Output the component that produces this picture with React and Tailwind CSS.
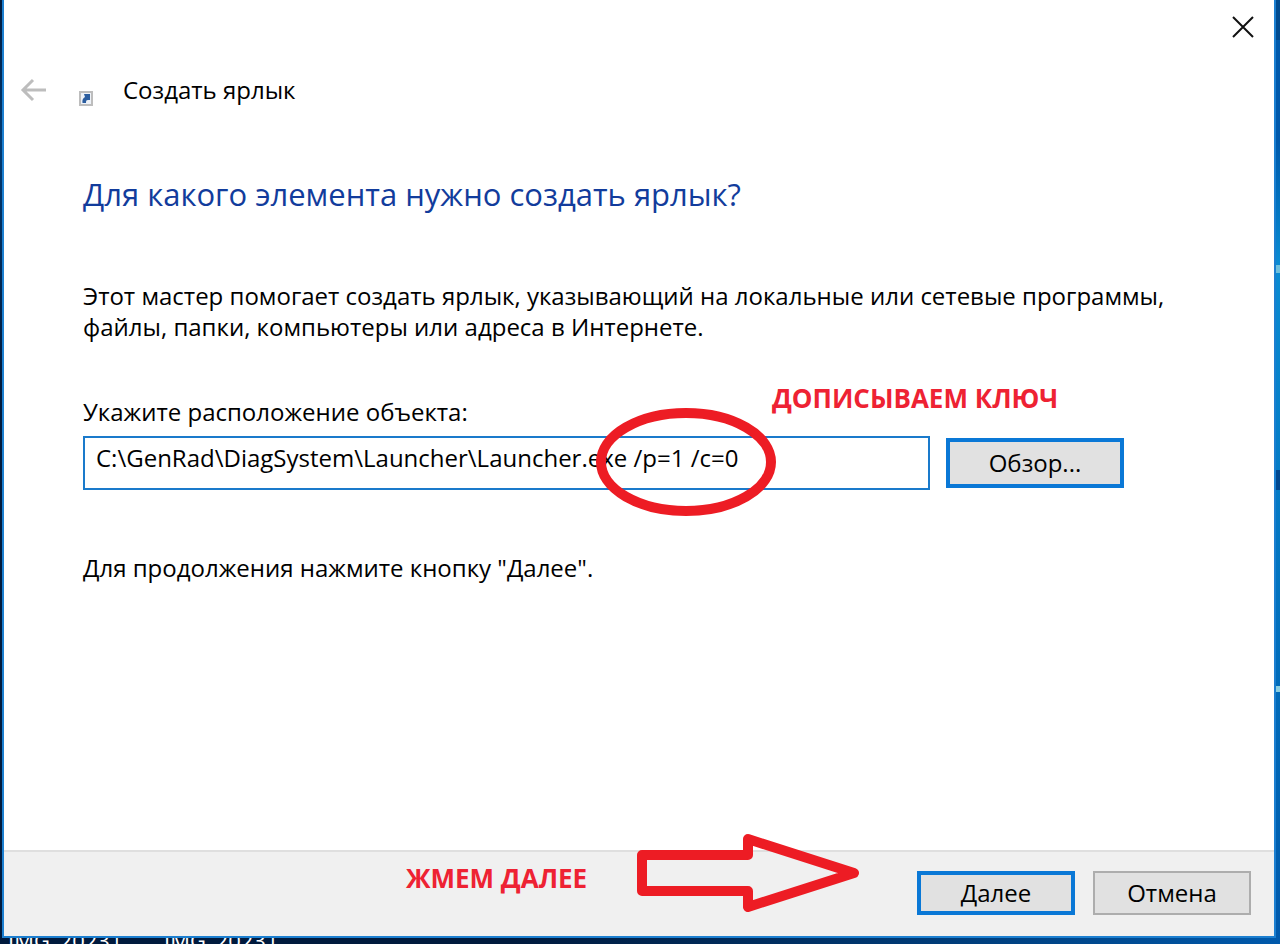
import React, { useState } from 'react';
import clsx from 'clsx';

const fileNames = ['IMG_20231', 'IMG_20231'];

const ShortcutIcon = () => (
    <svg width="14" height="15" viewBox="0 0 14 15" aria-hidden="true">
        <rect x="1" y="1" width="12" height="13" fill="#eef2f8" stroke="#bdbdbd" strokeWidth="2" />
        <path d="M5 3H11V9H9C7 9 7 10 7 12H3.500C3 9 4 7 6 6Z" fill="#2b5d9f" />
    </svg>
);

const BackArrow = () => (
    <svg width="27" height="24" viewBox="0 0 27 24" fill="none" stroke="#bdbdbd" strokeWidth="3" aria-hidden="true">
        <path d="M26 12H3M13 2L3 12L13 22" />
    </svg>
);

const CloseIcon = () => (
    <svg width="22" height="22" viewBox="0 0 22 22" fill="none" stroke="#111" strokeWidth="2" aria-hidden="true">
        <path d="M1 1L21 21M21 1L1 21" />
    </svg>
);

const DialogButton = ({ primary, className, children }) => (
    <button
        type="button"
        className={clsx(
            'shrink-0 bg-[#e1e1e1] text-center text-2xl text-black',
            primary ? 'border-4 border-[#0a78d6]' : 'border-2 border-[#adadad]',
            className
        )}
    >
        {children}
    </button>
);

// Red marker notes that lie over the dialog
const Note = ({ className, children }) => (
    <span className={clsx('absolute whitespace-nowrap text-[26px] leading-8 font-bold text-[#ee2233]', className)}>
        {children}
    </span>
);

const App = () => {
    const [location, setLocation] = useState('C:\\GenRad\\DiagSystem\\Launcher\\Launcher.exe /p=1 /c=0');

    return (
        <div className="flex min-h-screen flex-col bg-linear-to-r from-[#001a3d] from-40% to-[#0059ab] font-['Open_Sans','Noto_Sans',sans-serif] text-2xl text-black">
            <div className="flex flex-1">
                <div className="w-[2px] bg-linear-to-b from-[#001a3d] via-[#003a73] via-15% to-[#001a3d] to-40%" />
                <div className="flex flex-1 flex-col border-2 border-t-0 border-[#1c7fd0] bg-white">
                    <div className="flex justify-end pt-4 pr-5">
                        <button type="button" aria-label="Закрыть">
                            <CloseIcon />
                        </button>
                    </div>

                    <header className="flex items-center pt-9 pl-4">
                        <button type="button" aria-label="Назад" className="mr-8">
                            <BackArrow />
                        </button>
                        <span className="mr-[30px] pt-4">
                            <ShortcutIcon />
                        </span>
                        <span className="leading-8">Создать ярлык</span>
                    </header>

                    <main className="flex-1 px-[79px] pt-16">
                        <h1 className="text-[31px] leading-12 text-[#123c9c]">Для какого элемента нужно создать ярлык?</h1>
                        <p className="pt-[62px] leading-[31px]">
                            Этот мастер помогает создать ярлык, указывающий на локальные или сетевые программы,
                            <br />
                            файлы, папки, компьютеры или адреса в Интернете.
                        </p>

                        <div className="relative pt-[54px]">
                            <label htmlFor="location" className="block leading-8">Укажите расположение объекта:</label>
                            <div className="flex items-center gap-4 pt-2">
                                <input
                                    id="location"
                                    type="text"
                                    value={location}
                                    onChange={(e) => setLocation(e.target.value)}
                                    className="h-[54px] w-[847px] border-2 border-[#1a7acb] bg-white px-[11px] pb-3 outline-none"
                                />
                                <DialogButton primary className="h-[50px] w-[178px]">Обзор...</DialogButton>
                            </div>
                            <Note className="top-10 left-[689px]">ДОПИСЫВАЕМ КЛЮЧ</Note>
                            <svg width="182" height="110" viewBox="0 0 182 110" className="pointer-events-none absolute top-[65px] left-[512px]" aria-hidden="true">
                                <ellipse cx="91" cy="55" rx="85" ry="49" fill="none" stroke="#ed1c24" strokeWidth="10" />
                            </svg>
                        </div>

                        <p className="pt-[62px] leading-[31px]">Для продолжения нажмите кнопку "Далее".</p>
                    </main>

                    <footer className="relative flex justify-end gap-[18px] border-t-2 border-[#dfdfdf] bg-[#f0f0f0] pt-[19px] pr-[23px] pb-[21px]">
                        <Note className="top-[10px] left-[402px]">ЖМЕМ ДАЛЕЕ</Note>
                        <svg width="224" height="82" viewBox="0 0 224 82" className="pointer-events-none absolute top-[-20px] left-[632px]" fill="none" stroke="#ed1c24" strokeWidth="10" strokeLinejoin="round" aria-hidden="true">
                            <path d="M6 23H112V7L218 41L112 75V59H6Z" />
                        </svg>
                        <DialogButton primary className="h-[44px] w-[158px]">Далее</DialogButton>
                        <DialogButton className="h-[44px] w-[158px]">Отмена</DialogButton>
                    </footer>
                </div>
                {/* Desktop wallpaper showing past the dialog */}
                <div className="flex w-1 flex-col bg-linear-to-b from-[#0059ab] from-15% via-[#0a8bd2] via-28% to-[#0059ab]">
                    <div className="h-10 bg-[#004a8f]" />
                    <div className="mt-[225px] h-2 bg-[#6fc0dc]" />
                    <div className="mt-[197px] h-5 bg-[#00478f]" />
                    <div className="mt-[196px] h-[6px] bg-[#8ccfe0]" />
                </div>
            </div>

            {/* Desktop file captions, cut off by the screen edge */}
            <div className="flex h-[6px] gap-10 overflow-hidden pl-2 text-[22px] leading-1 text-white">
                {fileNames.map((name, index) => (
                    <span key={index} className="w-[116px]">{name}</span>
                ))}
            </div>
        </div>
    );
};

export default App;
